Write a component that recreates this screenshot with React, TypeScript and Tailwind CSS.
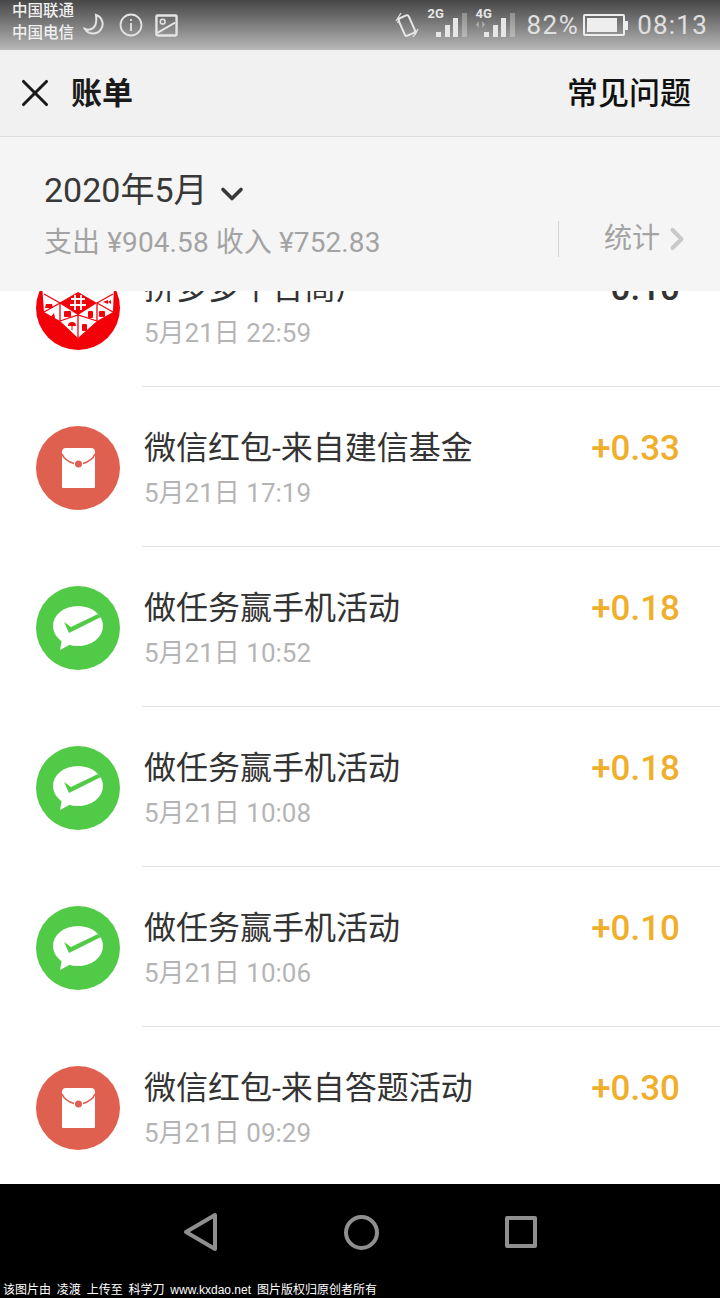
import React from 'react';
import { X, ChevronDown, ChevronRight } from 'lucide-react';

const FONT = "font-['Roboto','Noto_Sans_CJK_SC',sans-serif]";

type Kind = 'packet' | 'wechat';

interface Bill {
  title: string;
  time: string;
  amount: string;
  kind: Kind;
}

const bills: Bill[] = [
  { title: '微信红包-来自建信基金', time: '5月21日 17:19', amount: '+0.33', kind: 'packet' },
  { title: '做任务赢手机活动', time: '5月21日 10:52', amount: '+0.18', kind: 'wechat' },
  { title: '做任务赢手机活动', time: '5月21日 10:08', amount: '+0.18', kind: 'wechat' },
  { title: '做任务赢手机活动', time: '5月21日 10:06', amount: '+0.10', kind: 'wechat' },
  { title: '微信红包-来自答题活动', time: '5月21日 09:29', amount: '+0.30', kind: 'packet' },
];

const PacketIcon = () => (
  <svg viewBox="0 0 84 84" className="w-[84px] h-[84px] shrink-0 mt-[2px]">
    <circle cx="42" cy="42" r="42" fill="#e0604f" />
    <path d="M26 26a4 4 0 0 1 4-4h25a4 4 0 0 1 4 4v35a1 1 0 0 1-1 1H27a1 1 0 0 1-1-1z" fill="#fff" />
    <path d="M26 28c2 5 7 8 12 9.500M59 28c-2 5-7 8-12 9.500" fill="none" stroke="#e0604f" strokeWidth="1.6" />
    <circle cx="42.500" cy="38" r="3.500" fill="#e0604f" />
  </svg>
);

const WechatIcon = () => (
  <svg viewBox="0 0 84 84" className="w-[84px] h-[84px] shrink-0 mt-[2px]">
    <circle cx="42" cy="42" r="42" fill="#51cb47" />
    <ellipse cx="42" cy="40" rx="25" ry="20" fill="#fff" />
    <path d="M26 53l-2 11 11-6z" fill="#fff" />
    <path d="M28 36l7 5 27-13 3 3-32 16z" fill="#51cb47" />
  </svg>
);

const PinduoduoIcon = () => (
  <svg viewBox="0 0 84 84" className="w-[84px] h-[84px] shrink-0 mt-[2px]">
    <circle cx="42" cy="42" r="42" fill="#f40009" />
    <path d="M6 18h72l-1 28-16 9-19 17-18-17-16-9z" fill="#fff" />
    <path d="M8 46l16-9v18M77 46l-16-9v18M24 55l18-6 19 6M42 49v23M24 37L8 28M61 37l16-9" fill="none" stroke="#f40009" strokeWidth="1.300" />
    <path d="M42 26l19 11-19 12-19-12z" fill="#f40009" />
    <path d="M35 33h14M34 39h16M39 29v15M45 29v15" stroke="#fff" strokeWidth="1.800" fill="none" />
    {/* little goods in the tiles */}
    <path d="M10 38h6l1 4h-8z" fill="#f40009" />
    <path d="M67 36l5-2v4zM72 36l3-2v4z" fill="#f40009" />
    <path d="M14 52l4-5 1 5z" fill="#f40009" />
    <rect x="28" y="45" width="7" height="6" rx="1" fill="#f40009" />
    <rect x="52" y="45" width="5" height="7" rx="1" fill="#f40009" />
    <rect x="63" y="45" width="6" height="6" rx="1" fill="#f40009" />
    <path d="M32 60a4 4 0 0 1 8 0zM35.500 60h1v4h-1z" fill="#f40009" />
    <rect x="46" y="58" width="5" height="7" rx="1" fill="#f40009" />
  </svg>
);

const SignalBars = () => (
  <div className="absolute left-[9px] bottom-0 flex items-end gap-[3.400px]">
    <i className="block w-[5px] h-[5px] bg-current" />
    <i className="block w-[5px] h-[12px] bg-current" />
    <i className="block w-[5px] h-[19px] bg-current" />
    <i className="block w-[5px] h-[24px] bg-white/30" />
  </div>
);

const StatusBar = () => (
  <div className="h-[50px] flex items-center bg-gradient-to-b from-[#474747] to-[#b9b9b9] text-[#f0f0f0]">
    <div className="pl-3 w-[83px] -mt-[7px] text-[15.500px] leading-[22px] font-medium whitespace-nowrap">
      <div>中国联通</div>
      <div>中国电信</div>
    </div>
    <div className="flex items-center gap-3 text-[#e4e4e4]">
      <svg viewBox="0 0 24 24" className="w-6 h-6" fill="none" stroke="currentColor" strokeWidth="2">
        <path d="M13 2a9.500 9.500 0 1 1-11 14c5 2 13 0 11-14z" />
      </svg>
      <svg viewBox="0 0 24 24" className="w-6 h-6" fill="none" stroke="currentColor" strokeWidth="1.800">
        <circle cx="12" cy="12" r="10.500" />
        <path d="M12 10v8M12 6v2" />
      </svg>
      <svg viewBox="0 0 24 24" className="w-[23px] h-[23px]" fill="none" stroke="currentColor" strokeWidth="2.500">
        <rect x="1.500" y="1.500" width="21" height="21" rx="1" />
        <circle cx="8" cy="8" r="2.500" strokeWidth="1.600" />
        <path d="M2 20L21 9" strokeWidth="2" />
      </svg>
    </div>
    <div className="ml-auto flex items-center pr-3 text-[#e6e6e6]">
      <svg viewBox="0 0 24 28" className="w-6 h-7 mr-2" fill="none" stroke="currentColor">
        <rect x="6.500" y="5" width="11" height="19" rx="2" strokeWidth="2" transform="rotate(-24 12 15)" />
        <path d="M1 10l5-8M2.500 12l2-4M18 26l5-8M20 24l2-4" strokeWidth="1.200" />
      </svg>
      <div className="relative w-[38px] h-[29px] -mt-[5px] mr-[10px]">
        <span className="absolute left-0 top-0 text-[13px] leading-[12px] font-bold">2G</span>
        <SignalBars />
      </div>
      <div className="relative w-[38px] h-[29px] -mt-[5px] mr-[13px]">
        <span className="absolute left-0 top-0 text-[13px] leading-[12px] font-bold">4G</span>
        <svg viewBox="0 0 10 8" className="absolute left-[1px] top-[13px] w-[9px] h-[7px] text-white/40" fill="currentColor">
          <path d="M3 0v8L0 4zM7 0v8l3-4z" />
        </svg>
        <SignalBars />
      </div>
      <span className="text-[26px] leading-none tracking-[1.500px] text-[#e0e0e0]">82%</span>
      <div className="flex items-center ml-[4px] mr-[9px]">
        <div className="w-[42px] h-[22px] border-2 border-[#eeeeee] rounded-[2px] p-[2px]">
          <div className="h-full w-[88%] bg-[#eeeeee]" />
        </div>
        <div className="w-[3px] h-[9px] bg-[#eeeeee]" />
      </div>
      <span className="text-[26px] leading-none tracking-[1.200px] text-[#e0e0e0]">08:13</span>
    </div>
  </div>
);

const RowBody = ({ title, time, amount, amountColor }: { title: string; time: string; amount: string; amountColor: string }) => (
  <div className="ml-[22px] flex-1 h-full border-b border-[#e3e3e3] flex justify-between pl-[2px] pr-10 pt-[39px]">
    <div>
      <div className="text-[32px] leading-[44px] text-[#333333] whitespace-nowrap">{title}</div>
      <div className="text-[26px] leading-[36px] mt-[5px] text-[#b5b5b5]">{time}</div>
    </div>
    <div className={`text-[35px] leading-[44px] mt-px font-medium ${amountColor}`}>{amount}</div>
  </div>
);

export default function App() {
  return (
    <div className={`w-[720px] h-[1298px] bg-white overflow-hidden flex flex-col ${FONT}`}>
      <StatusBar />

      <div className="h-[87px] bg-[#f1f1f1] border-b border-[#dcdcdc] flex items-center pl-3 pr-[29px] shrink-0">
        <X className="w-[46px] h-[46px] text-[#1a1a1a]" strokeWidth={1.6} />
        <h1 className="ml-[13px] text-[31px] font-bold text-[#1a1a1a] leading-none">账单</h1>
        <button className="ml-auto text-[31px] font-medium text-[#111111] leading-none">常见问题</button>
      </div>

      <div className="h-[154px] bg-[#f5f5f5] pl-11 pr-[25px] flex flex-col shrink-0">
        <div className="flex items-center mt-[31px] h-[44px]">
          <span className="text-[34px] text-[#383838] leading-none">2020年5月</span>
          <ChevronDown className="w-9 h-9 ml-[6px] mt-2 text-[#383838]" strokeWidth={2.4} />
        </div>
        <div className="flex items-center mt-2">
          <span className="text-[28px] text-[#a3a3a3] leading-[46px] tracking-[0.100px]">支出 ¥904.58 收入 ¥752.83</span>
          <div className="ml-auto flex items-center h-9 -mt-2 border-l border-[#d4d4d4] pl-[45px]">
            <span className="text-[28px] text-[#a3a3a3] leading-none">统计</span>
            <ChevronRight className="w-9 h-9 -ml-[1px] text-[#c9c9c9]" strokeWidth={2.7} />
          </div>
        </div>
      </div>

      {/* first row is scrolled under the header */}
      <div className="h-[96px] shrink-0 overflow-hidden">
        <div className="-mt-16 h-40 flex items-center pl-9">
          <PinduoduoIcon />
          <RowBody title="拼多多平台商户" time="5月21日 22:59" amount="-0.10" amountColor="text-[#333333]" />
        </div>
      </div>

      {bills.map((bill, i) => (
        <div key={i} className="h-40 shrink-0 flex items-center pl-9">
          {bill.kind === 'packet' ? <PacketIcon /> : <WechatIcon />}
          <RowBody title={bill.title} time={bill.time} amount={bill.amount} amountColor="text-[#efaf2c]" />
        </div>
      ))}

      <div className="flex-1 bg-black -mt-[3px] relative">
        <svg viewBox="0 0 36 40" className="absolute left-[183px] top-[28px] w-9 h-10" fill="none" stroke="#8f8f8f" strokeWidth="4" strokeLinejoin="round">
          <path d="M32 3v34L3 20z" />
        </svg>
        <div className="absolute left-[344px] top-[31px] w-[35px] h-[35px] rounded-full border-4 border-[#8f8f8f]" />
        <div className="absolute left-[505px] top-8 w-8 h-8 rounded-[2px] border-4 border-[#8f8f8f]" />
        <div className="absolute left-[3px] bottom-0 text-[12px] leading-4 text-white font-['Liberation_Sans','Noto_Sans_CJK_SC',sans-serif] whitespace-pre [word-spacing:2.500px]">
          该图片由 凌渡 上传至 科学刀 www.kxdao.net 图片版权归原创者所有
        </div>
      </div>
    </div>
  );
}
